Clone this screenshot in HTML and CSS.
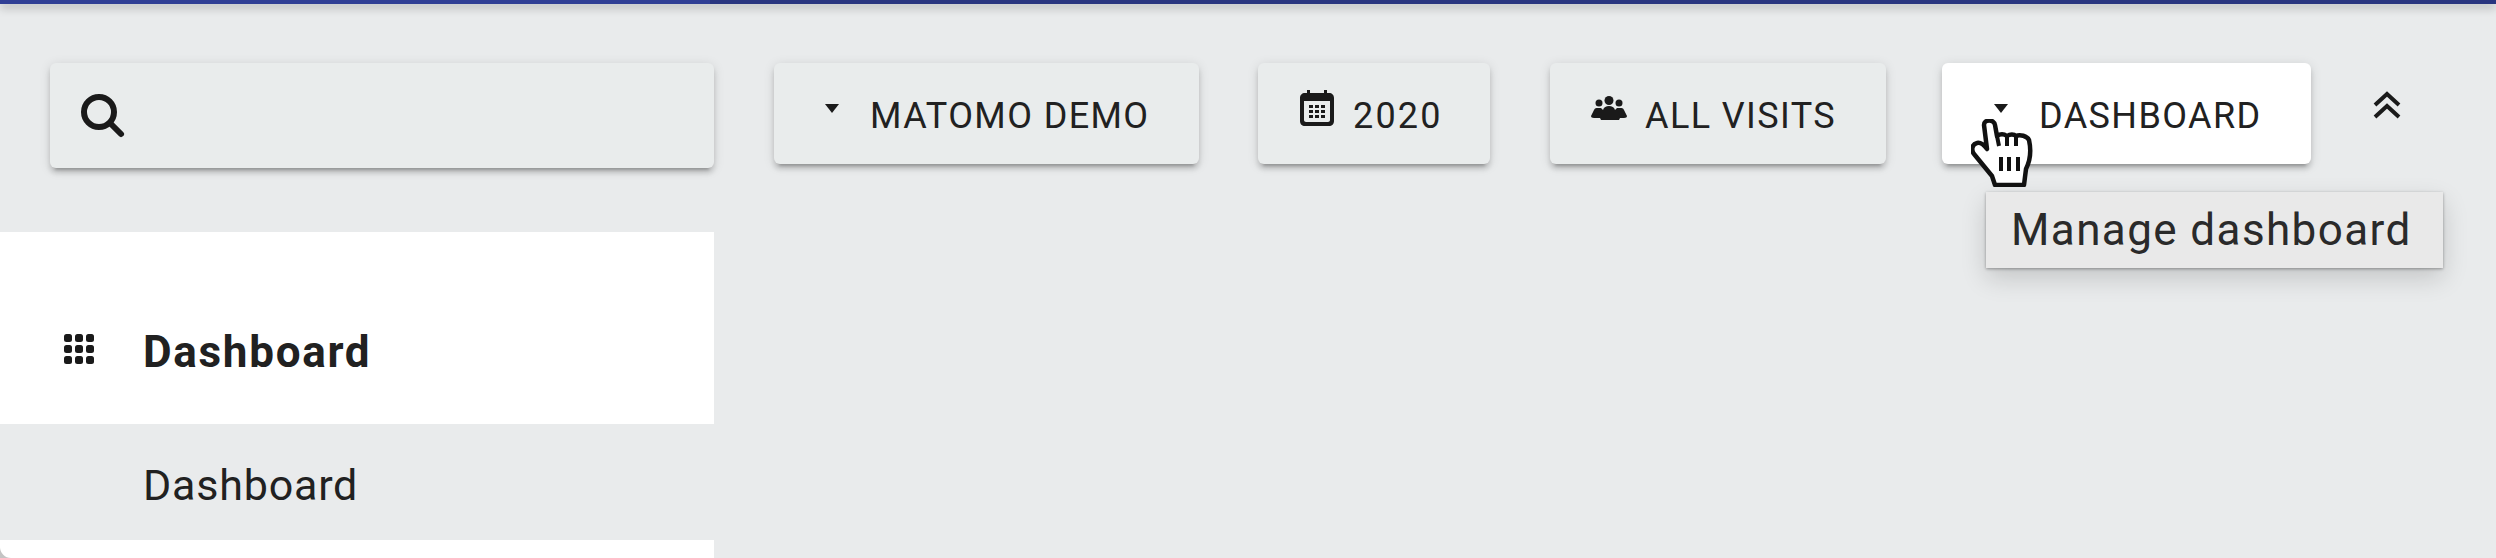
FILE: index.html
```html
<!DOCTYPE html>
<html lang="en">
<head>
    <meta charset="UTF-8">
    <title>Matomo Demo - Dashboard</title>
    <link rel="stylesheet" href="styles.css">
</head>
<body>
    <div class="top-bar"></div>

    <div class="toolbar">
        <div class="search-box">
            <svg class="search-icon" viewBox="0 0 46 46"><circle cx="19" cy="19" r="15"/><path d="M30 30 L41 41"/></svg>
        </div>
        <div class="quick-buttons">
            <div class="btn btn-site"><span class="caret"></span>MATOMO DEMO</div>
            <div class="btn btn-date">
                <svg class="btn-icon" viewBox="0 0 36 36"><path fill-rule="evenodd" d="M8 0h3v3h14V0h3v3h2c3 0 5 2 5 5v23c0 3-2 5-5 5H6c-3 0-5-2-5-5V8c0-3 2-5 5-5h2zM5 11v19c0 1 1 2 2 2h22c1 0 2-1 2-2V11z"/><path d="M10 15h4v3h-4zM16 15h4v3h-4zM22 15h4v3h-4zM10 20h4v3h-4zM16 20h4v3h-4zM22 20h4v3h-4zM10 25h4v3h-4zM16 25h4v3h-4zM22 25h4v3h-4z"/></svg>
                <span class="year">2020</span>
            </div>
            <div class="btn btn-segment">
                <svg class="btn-icon btn-icon-wide" viewBox="0 0 36 24"><circle cx="18" cy="4.500" r="4.500"/><circle cx="8" cy="7" r="3.500"/><circle cx="28" cy="7" r="3.500"/><path d="M0 20l3-6c1-2 2-2 4-2h3l2 2c1-3 3-4 6-4s5 1 6 4l2-2h3c2 0 3 0 4 2l3 6c0 1-1 2-3 2h-4l-1 2H10l-1-2H3c-2 0-3-1-3-2z"/></svg>
                ALL VISITS
            </div>
            <div class="btn btn-dashboard btn-active"><span class="caret"></span>DASHBOARD</div>
            <svg class="collapse-icon" viewBox="0 0 30 28"><path d="M3 14 L15 3 L27 14 M3 26 L15 15 L27 26"/></svg>
        </div>
    </div>

    <div class="side-menu">
        <div class="menu-head">
            <svg class="grid-icon" viewBox="0 0 30 30">
                <rect x="0" y="0" width="8" height="8" rx="2.500"/><rect x="11" y="0" width="8" height="8" rx="2.500"/><rect x="22" y="0" width="8" height="8" rx="2.500"/>
                <rect x="0" y="11" width="8" height="8" rx="2.500"/><rect x="11" y="11" width="8" height="8" rx="2.500"/><rect x="22" y="11" width="8" height="8" rx="2.500"/>
                <rect x="0" y="22" width="8" height="8" rx="2.500"/><rect x="11" y="22" width="8" height="8" rx="2.500"/><rect x="22" y="22" width="8" height="8" rx="2.500"/>
            </svg>
            <span>Dashboard</span>
        </div>
        <div class="menu-item">Dashboard</div>
        <div class="menu-rest"></div>
    </div>

    <!-- hover state: tooltip and pointer sit over the toolbar -->
    <div class="tooltip">Manage dashboard</div>
    <svg class="hand-cursor" viewBox="0 0 62 68">
        <path d="M13 6C13 0 23 0 24 6L26 17C29 15 33 15 36 17C39 15 43 15 45 17C49 15 56 17 58 21C60 30 60 40 55 50L53 66L24 66L21 57L3 35C0 31 1 25 6 24C10 23 13 26 16 30Z" fill="#fff" stroke="#111" stroke-width="4.500" stroke-linejoin="round"/>
        <path d="M26 17l2 10M36 17v10M45 17v10M30 38v14M38 38v14M47 38v14" fill="none" stroke="#111" stroke-width="4"/>
    </svg>
</body>
</html>
```

FILE: styles.css
```css
* {
    margin: 0;
    padding: 0;
    box-sizing: border-box;
}

html, body {
    height: 558px;
    overflow: hidden;
}

body {
    position: relative;
    background: #e9ebec;
    color: #212121;
    font-family: Roboto, "Liberation Sans", sans-serif;
}

.top-bar {
    height: 4px;
    background: linear-gradient(90deg, #303f95 0, #303f95 710px, #29357f 710px);
    box-shadow: 0 3px 10px rgba(0,0,0,0.35);
}

.toolbar {
    display: flex;
    align-items: flex-start;
    padding: 59px 0 0 50px;
}

.search-box {
    width: 664px;
    height: 105px;
    display: flex;
    align-items: center;
    padding-left: 30px;
    background: #e9ecec;
    border-radius: 6px;
    box-shadow: 0 5px 5px rgba(0,0,0,0.14), 0 7px 3px -5px rgba(0,0,0,0.2), 0 2px 12px rgba(0,0,0,0.12);
}

.search-icon {
    width: 46px;
    height: 46px;
    fill: none;
    stroke: #1a1a1a;
    stroke-width: 6;
    stroke-linecap: round;
}

.quick-buttons {
    display: flex;
    align-items: flex-start;
    margin-left: 60px;
}

.btn {
    height: 101px;
    display: flex;
    align-items: center;
    padding-top: 4px;
    background: #e9ecec;
    font-size: 36px;
    letter-spacing: 1.4px;
    border-radius: 6px;
    white-space: nowrap;
    box-shadow: 0 5px 5px rgba(0,0,0,0.14), 0 7px 3px -5px rgba(0,0,0,0.2), 0 2px 12px rgba(0,0,0,0.12);
}

.btn-site {
    width: 425px;
    padding-left: 51px;
    margin-right: 59px;
}

.btn-date {
    width: 232px;
    padding-left: 41px;
    margin-right: 60px;
}

.year {
    letter-spacing: 2.2px;
}

.btn-segment {
    width: 336px;
    padding-left: 41px;
    margin-right: 56px;
}

.btn-dashboard {
    width: 369px;
    padding-left: 52px;
}

.btn-active {
    background: #fff;
}

.caret {
    width: 0;
    height: 0;
    margin: -14px 31px 0 0;
    border-left: 7px solid transparent;
    border-right: 7px solid transparent;
    border-top: 9px solid #1a1a1a;
}

.btn-icon {
    width: 36px;
    height: 36px;
    margin: -16px 18px 0 0;
    fill: #1a1a1a;
}

.btn-icon-wide {
    height: 24px;
}

.collapse-icon {
    width: 30px;
    height: 28px;
    margin: 28px 0 0 61px;
    fill: none;
    stroke: #1a1a1a;
    stroke-width: 4;
}

.side-menu {
    position: absolute;
    left: 0;
    top: 232px;
    width: 714px;
    bottom: 0;
    background: #c4c4c4;
    display: flex;
    flex-direction: column;
}

.menu-head {
    height: 192px;
    display: flex;
    align-items: center;
    gap: 49px;
    padding: 48px 0 0 64px;
    background: #fff;
    font-size: 44px;
    font-weight: 700;
    letter-spacing: 1.7px;
}

.grid-icon {
    width: 30px;
    height: 30px;
    margin-top: -7px;
    fill: #1a1a1a;
}

.menu-item {
    height: 116px;
    display: flex;
    align-items: center;
    padding: 5px 0 0 143px;
    background: #e9ebec;
    font-size: 43px;
    letter-spacing: 0.8px;
}

.menu-rest {
    flex: 1;
    background: #fff;
    border-bottom-left-radius: 11px;
}

.tooltip {
    position: absolute;
    left: 1986px;
    top: 192px;
    width: 457px;
    height: 76px;
    display: flex;
    align-items: center;
    padding-left: 25px;
    background: #e9e9e9;
    color: #2a2a2a;
    font-size: 44px;
    letter-spacing: 1.4px;
    white-space: nowrap;
    box-shadow: 0 1px 3px rgba(0,0,0,0.35), 0 10px 24px rgba(0,0,0,0.16);
}

.hand-cursor {
    position: absolute;
    left: 1971px;
    top: 119px;
    width: 62px;
    height: 68px;
    filter: blur(0.6px);
}
```
